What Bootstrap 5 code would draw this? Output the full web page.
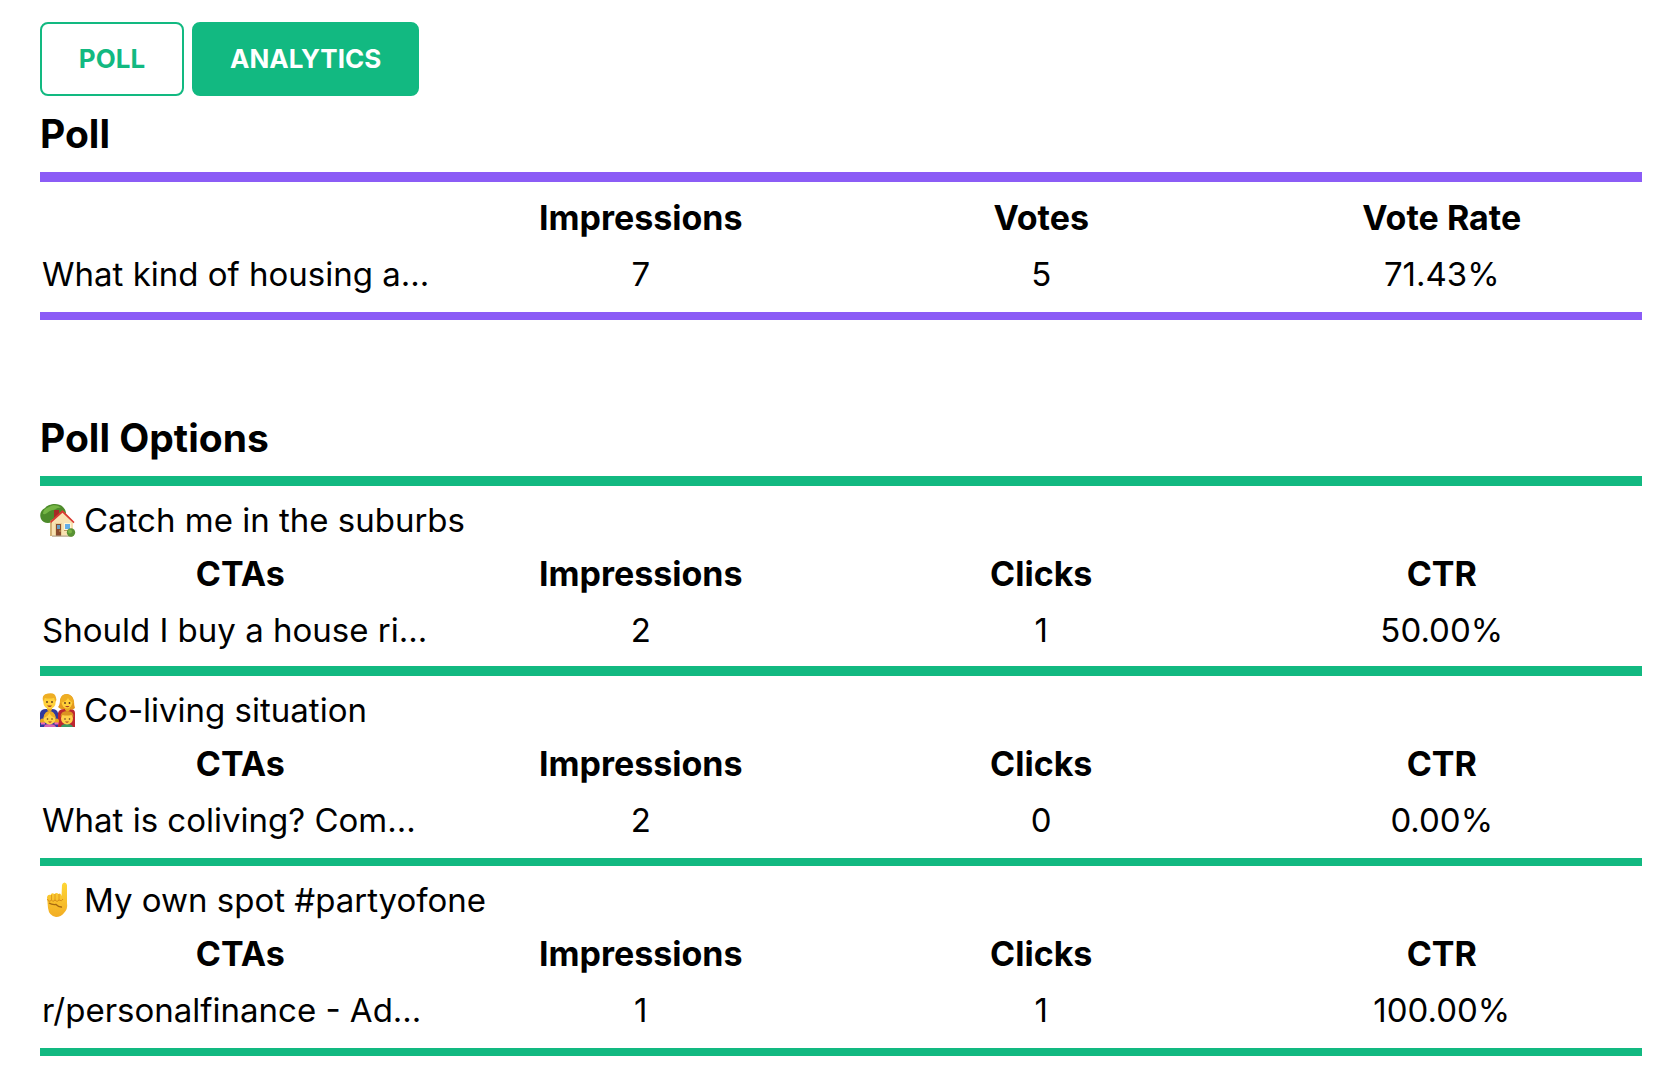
<!DOCTYPE html>
<html lang="en">
<head>
<meta charset="utf-8">
<meta name="viewport" content="width=device-width, initial-scale=1">
<title>Poll Analytics</title>
<link href="https://cdn.jsdelivr.net/npm/bootstrap@5.3.0/dist/css/bootstrap.min.css" rel="stylesheet">
<style>
  :root { --poll-green: #12b981; --poll-purple: #8b5cf6; }
  body { font-family: Inter, "Liberation Sans", sans-serif; font-size: 33px; line-height: 52px; color: #000; background: #fff; }
  .page { padding: 22px 30px 34px 40px; }
  .btn-poll {
    --bs-btn-padding-x: 36px; --bs-btn-padding-y: 16px;
    --bs-btn-font-size: 26px; --bs-btn-line-height: 38px; --bs-btn-font-weight: 700;
    --bs-btn-border-width: 2px; --bs-btn-border-radius: 8px;
    --bs-btn-color: var(--poll-green); --bs-btn-border-color: var(--poll-green);
    --bs-btn-hover-color: #fff; --bs-btn-hover-bg: var(--poll-green); --bs-btn-hover-border-color: var(--poll-green);
    --bs-btn-active-color: #fff; --bs-btn-active-bg: var(--poll-green); --bs-btn-active-border-color: var(--poll-green);
    min-width: 144px;
  }
  .section-title { font-size: 39px; line-height: 60px; font-weight: 700; padding: 8px 0; }
  .rule-purple, .rule-green { border: 0 solid var(--poll-green); padding: 8px 0; }
  .rule-purple { border-color: var(--poll-purple); padding-bottom: 10px; border-width: 10px 0 8px; }
  .rule-green { border-bottom-width: 10px; }
  .rule-green:first-child { border-top-width: 10px; }
  .rule-green.rule-thin { padding-bottom: 10px; border-bottom-width: 8px; }
  .stats { table-layout: fixed; width: 100%; }
  .stats th, .stats td { padding: 2px; text-align: center; width: 25%; }
  .stats th { font-size: 34px; font-weight: 700; }
  .stats td:first-child { text-align: left; white-space: nowrap; }
  .options { margin-top: 80px; }
  .emoji { width: 36px; height: 36px; flex: none; }
</style>
</head>
<body>
<main class="page">
  <div class="d-flex gap-2">
    <button type="button" class="btn btn-poll">POLL</button>
    <button type="button" class="btn btn-poll active" aria-pressed="true">ANALYTICS</button>
  </div>

  <section>
    <h2 class="section-title mb-0">Poll</h2>
    <div class="rule-purple">
      <table class="stats">
        <thead><tr><th></th><th scope="col">Impressions</th><th scope="col">Votes</th><th scope="col">Vote Rate</th></tr></thead>
        <tbody><tr><td>What kind of housing a...</td><td>7</td><td>5</td><td>71.43%</td></tr></tbody>
      </table>
    </div>
  </section>

  <section class="options">
    <h2 class="section-title mb-0">Poll Options</h2>
    <div>
      <article class="rule-green">
        <div class="d-flex align-items-center gap-2">
          <svg class="emoji" viewBox="0 0 36 36" role="img" aria-label="House with garden">
            <path d="M12 20C8 22 3 21 1 17c-2-5 0-9 4-11 3-4 13-6 18-1 3 3 4 7 2 11z" fill="#4d8b2b"/>
            <path d="M3 12c0-5 4-6 6-7 4-3 10-2 12 1-4-1-5 2-8 2-4 0-6 5-10 4z" fill="#75b545"/>
            <path d="M10 19l3-2v17h-3z" fill="#d2b176"/>
            <path d="M12 19L23 9l10 10v15.500H12z" fill="#f8e2b2"/>
            <path d="M14 8h5v4l-5 4z" fill="#a62b25"/>
            <path d="M10 19.500L22.500 8 34.500 20l-1 1.200L22.500 10.800 11 21z" fill="#d83a32"/>
            <path d="M15 21h7v13h-7z" fill="#ead098"/><path d="M16 22h5v12h-5z" fill="#8a4b2d"/>
            <path d="M17 23h3v4h-3z" fill="#6b9fc4"/><circle cx="20" cy="29" r=".7" fill="#e6bd65"/>
            <path d="M24 21h7v7h-7z" fill="#fff4d6"/><path d="M25 22h5v5h-5z" fill="#64aee8"/><path d="M24 28h7v1h-7z" fill="#b99661"/>
            <path d="M12 33.500h20v1.200H12z" fill="#b5a895"/>
            <circle cx="31" cy="30.500" r="4.200" fill="#599234"/><circle cx="30" cy="29.500" r="2" fill="#79b443"/>
          </svg>
          <span>Catch me in the suburbs</span>
        </div>
        <table class="stats">
          <thead><tr><th scope="col">CTAs</th><th scope="col">Impressions</th><th scope="col">Clicks</th><th scope="col">CTR</th></tr></thead>
          <tbody><tr><td>Should I buy a house ri...</td><td>2</td><td>1</td><td>50.00%</td></tr></tbody>
        </table>
      </article>

      <article class="rule-green rule-thin">
        <div class="d-flex align-items-center gap-2">
          <svg class="emoji" viewBox="0 0 36 36" role="img" aria-label="Family">
            <path d="M0 35V21q1-4 6-4h6q5 0 6 4v14z" fill="#303b9c"/>
            <path d="M18 35V21q1-4 6-4h6q5 0 5 4v14z" fill="#be2630"/>
            <path d="M18 15q2-2 2-7 1-6 7-6 6 1 7 7 0 5 1 7-3 3-6 1h-5q-3 1-6-2z" fill="#e3981d"/>
            <path d="M7 14h5v4l-2.500 2L7 18zM25 14h5v4l-2.500 2L25 18z" fill="#e7a925"/>
            <ellipse cx="9.500" cy="10" rx="6.200" ry="7" fill="#ffd13b"/>
            <path d="M3 10Q1 2 8 1.500q7-1.500 8 4 1 2-.500 4.500L14 6q-6 1-9 0z" fill="#eeae24"/>
            <ellipse cx="27" cy="10" rx="5.500" ry="6.500" fill="#ffd13b"/>
            <path d="M20 11q0-9 7-9 6 1 7 9-4-1-6-5-2 4-8 5z" fill="#eeae24"/>
            <g fill="#59371f"><circle cx="7" cy="10" r=".9"/><circle cx="12" cy="10" r=".9"/><circle cx="25" cy="11" r=".9"/><circle cx="29.500" cy="11" r=".9"/></g>
            <path d="M7 13.500h5q-2 3-5 0zM25 14h4.500q-2 2.500-4.500 0z" fill="#a93e22"/>
            <path d="M4 35q0-3 5-3 6 0 7 3z" fill="#d866b2"/><path d="M21 35q0-3 6-3 5 0 6 3z" fill="#3b9a65"/>
            <circle cx="2.500" cy="29" r="2.500" fill="#eba920"/><circle cx="16.500" cy="29" r="2.500" fill="#eba920"/>
            <path d="M1 31.500h4M14.500 31.500h4" stroke="#ed68b8" stroke-width="2"/>
            <circle cx="9.500" cy="26.500" r="6" fill="#ffd64a"/><path d="M3.500 26q1-7 6-7t6.500 7q-5-1-6.500-5-2 4-6 5z" fill="#eeb026"/>
            <circle cx="27" cy="26.500" r="6" fill="#ffd14a"/><path d="M20.500 25q0-6 6.500-6 7 0 6.500 6l-2-2q-5 1-9 0z" fill="#dc9221"/>
            <g fill="#59371f"><circle cx="7.500" cy="27" r=".8"/><circle cx="12" cy="27" r=".8"/><circle cx="25" cy="27" r=".8"/><circle cx="29.500" cy="27" r=".8"/></g>
            <path d="M8 29.500h4q-2 2.500-4 0zM25 29.500h4q-2 2.500-4 0z" fill="#a93e22"/>
          </svg>
          <span>Co-living situation</span>
        </div>
        <table class="stats">
          <thead><tr><th scope="col">CTAs</th><th scope="col">Impressions</th><th scope="col">Clicks</th><th scope="col">CTR</th></tr></thead>
          <tbody><tr><td>What is coliving? Com...</td><td>2</td><td>0</td><td>0.00%</td></tr></tbody>
        </table>
      </article>

      <article class="rule-green rule-thin">
        <div class="d-flex align-items-center gap-2">
          <svg class="emoji" viewBox="0 0 36 36" role="img" aria-label="Pointing up">
            <defs><linearGradient id="skin" x2="0" y2="1"><stop stop-color="#ffd735"/><stop offset="1" stop-color="#f2ad24"/></linearGradient></defs>
            <path d="M21.500 14L22 3q.500-2.500 2.500-2.500T27 3v18q1 6-3 10-3 4-8 4-7-1-8-9L7 15q1-3 3.500-2 1-3 4-1 2-2 4 0 2-1.500 3 2z" fill="url(#skin)"/>
            <path d="M11.500 13v5M15 12v6M19 12v6" stroke="#e09a1e" fill="none"/>
            <path d="M7.500 17q1 4 4 1 1 3 3.500 0 2 3 4 0 3 2 4-1" fill="none" stroke="#d68c1a"/>
            <path d="M9 21q4-2 9-1 4 1 4 3-1 3-4 2" fill="#f8be2b"/>
            <path d="M9 21q3 2 7 1.500 3 3 6 2.500" fill="none" stroke="#a86a10" stroke-width="1.400"/>
          </svg>
          <span>My own spot #partyofone</span>
        </div>
        <table class="stats">
          <thead><tr><th scope="col">CTAs</th><th scope="col">Impressions</th><th scope="col">Clicks</th><th scope="col">CTR</th></tr></thead>
          <tbody><tr><td>r/personalfinance - Ad...</td><td>1</td><td>1</td><td>100.00%</td></tr></tbody>
        </table>
      </article>
    </div>
  </section>
</main>
<script src="https://cdn.jsdelivr.net/npm/bootstrap@5.3.0/dist/js/bootstrap.bundle.min.js"></script>
</body>
</html>
